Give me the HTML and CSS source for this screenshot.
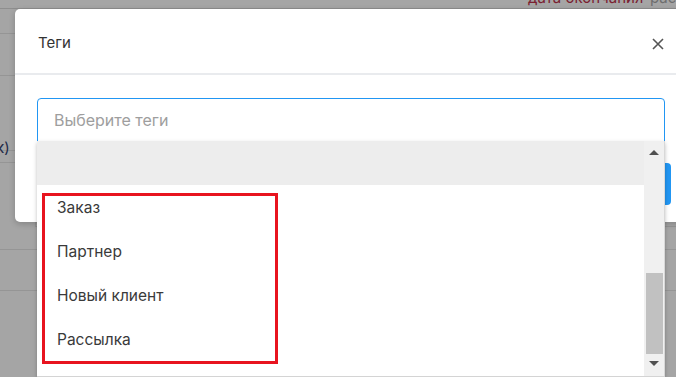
FILE: index.html
```html
<!DOCTYPE html>
<html lang="ru">
<head>
    <meta charset="UTF-8">
    <meta name="viewport" content="width=device-width, initial-scale=1.0">
    <title>Теги</title>
    <link rel="stylesheet" href="styles.css">
</head>
<body>
<!-- Page behind the dialog -->
<div id="page">
    <div class="page-top">
        <span class="col-end">дата окончания</span>
        <span class="col-next">рас</span>
    </div>
    <div class="page-row" style="height: 25px"></div>
    <div class="page-row" style="height: 42px"></div>
    <div class="page-row page-text" style="height: 75px">к)</div>
    <div class="page-row" style="height: 12px"></div>
    <div class="page-row page-tick" style="height: 64px"></div>
    <div class="page-row" style="height: 23px"></div>
    <div class="page-row" style="height: 41px"></div>
</div>

<!-- Tags dialog -->
<div id="modal">
    <div class="modal-header">
        <h3>Теги</h3>
        <svg class="close" width="12" height="12" viewBox="0 0 12 12">
            <path d="M1 1 L11 11 M11 1 L1 11" stroke="#555" stroke-width="1.6" fill="none"/>
        </svg>
    </div>
    <div class="modal-body">
        <div class="select-box">
            <input type="text" class="tag-input" placeholder="Выберите теги">
            <div class="dropdown">
                <div class="options">
                    <div class="option option-empty"></div>
                    <div class="option">Заказ</div>
                    <div class="option">Партнер</div>
                    <div class="option">Новый клиент</div>
                    <div class="option">Рассылка</div>
                    <div class="option">Встреча</div>
                </div>
                <div class="scrollbar">
                    <span class="arrow-up"></span>
                    <span class="thumb"></span>
                    <span class="arrow-down"></span>
                </div>
            </div>
        </div>
        <div class="modal-actions">
            <a href="#" class="button">Сохранить</a>
        </div>
    </div>
</div>

<!-- Annotation -->
<div class="highlight"></div>
</body>
</html>
```

FILE: styles.css
```css
/* General Styles */
body {
    margin: 0;
    background-color: #a5a5a5;
    font-family: Inter, "Noto Sans", sans-serif;
    color: #333;
    overflow: hidden;
    height: 377px;
}

/* Background page */
#page {
    width: 100%;
}

.page-top {
    height: 8px;
    border-bottom: 1px solid #8e8e8e;
    position: relative;
    overflow: hidden;
    font-size: 15px;
    line-height: 15px;
}

.col-end {
    position: absolute;
    left: 528px;
    top: -10px;
    color: #7a2030;
}

.col-next {
    position: absolute;
    left: 650px;
    top: -10px;
    color: #6e6e6e;
}

.page-row {
    border-bottom: 1px solid #959595;
    box-sizing: border-box;
}

.page-text {
    font-size: 15px;
    color: #1d2a48;
    padding-top: 62px;
    text-indent: -4px;
}

.page-tick {
    border-left: 1px solid #9a9a9a;
    margin-left: 35px;
}

/* Dialog */
#modal {
    position: absolute;
    left: 15px;
    top: 9px;
    width: 672px;
    height: 213px;
    background-color: #fff;
    border-radius: 5px;
    box-shadow: 0 2px 6px rgba(0, 0, 0, 0.2);
}

.modal-header {
    height: 66px;
    border-bottom: 2px solid #e9ebee;
    display: flex;
    align-items: center;
    justify-content: space-between;
    padding: 0 23px 0 23px;
    box-sizing: border-box;
}

.modal-header h3 {
    margin: 0;
    font-size: 15px;
    font-weight: 400;
    color: #333;
    padding-top: 3px;
}

.close {
    display: block;
    margin-top: 5px;
}

.modal-body {
    padding: 23px 22px 0 22px;
}

.select-box {
    position: relative;
    width: 628px;
}

.tag-input {
    display: block;
    width: 100%;
    height: 44px;
    box-sizing: border-box;
    border: 1px solid #2196f3;
    border-radius: 4px 4px 0 0;
    padding: 0 16px;
    font-family: Inter, "Noto Sans", sans-serif;
    font-size: 16px;
    color: #333;
    outline: none;
}

.tag-input::placeholder {
    color: #9e9e9e;
}

.dropdown {
    position: absolute;
    left: 0;
    top: 43px;
    width: 628px;
    height: 236px;
    background-color: #fff;
    border-bottom: 1px solid #d4d4d4;
    box-shadow: 0 2px 4px rgba(0, 0, 0, 0.25);
    display: flex;
    z-index: 2;
    box-sizing: border-box;
}

.options {
    flex: 1;
    overflow: hidden;
}

.option {
    height: 44px;
    display: flex;
    align-items: center;
    padding-left: 20px;
    font-size: 15.5px;
    color: #3a3a3a;
}

.option-empty {
    height: 44px;
    background-color: #ededed;
}

.scrollbar {
    width: 21px;
    background-color: #f0f0f0;
    position: relative;
    border-right: 1px solid #d8d8d8;
    box-sizing: border-box;
}

.arrow-up,
.arrow-down {
    position: absolute;
    left: 5px;
    width: 0;
    height: 0;
    border-left: 5px solid transparent;
    border-right: 5px solid transparent;
}

.arrow-up {
    top: 9px;
    border-bottom: 5px solid #505050;
}

.arrow-down {
    bottom: 10px;
    border-top: 5px solid #505050;
}

.thumb {
    position: absolute;
    left: 2px;
    width: 17px;
    top: 132px;
    height: 81px;
    background-color: #c1c1c1;
}

.modal-actions {
    display: flex;
    justify-content: flex-end;
    margin-top: 21px;
}

.button {
    background-color: #2196f3;
    color: #fff;
    text-decoration: none;
    border-radius: 4px;
    height: 42px;
    line-height: 42px;
    padding: 0 20px;
    font-size: 15px;
    margin-right: -6px;
}

/* Red annotation frame */
.highlight {
    position: absolute;
    left: 42px;
    top: 193px;
    width: 230px;
    height: 165px;
    border: 3px solid #e8141f;
    z-index: 5;
}
```
